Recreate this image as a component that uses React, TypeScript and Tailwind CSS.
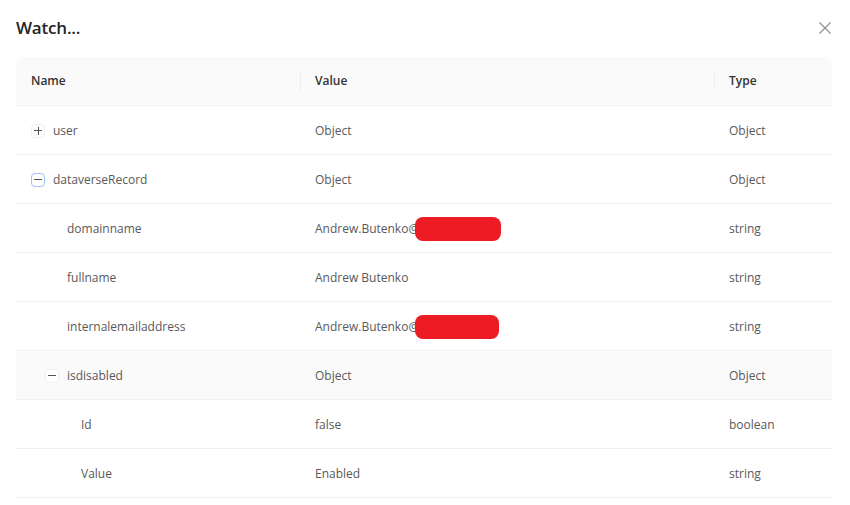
import React from "react";

type Row = {
  name: string;
  value: React.ReactNode;
  type: string;
  level: number;
  icon?: "plus" | "minus" | "minus-focus";
  hover?: boolean;
};

const Redact = ({ w }: { w: number }) => (
  <span
    className="inline-block h-[24px] -ml-[4px] rounded-[8px] bg-[#ed1c24] align-middle"
    style={{ width: w }}
  />
);

const rows: Row[] = [
  { name: "user", value: "Object", type: "Object", level: 0, icon: "plus" },
  { name: "dataverseRecord", value: "Object", type: "Object", level: 0, icon: "minus-focus" },
  {
    name: "domainname",
    value: (
      <span className="flex items-center">
        Andrew.Butenko@<Redact w={86} />
      </span>
    ),
    type: "string",
    level: 1,
  },
  { name: "fullname", value: "Andrew Butenko", type: "string", level: 1 },
  {
    name: "internalemailaddress",
    value: (
      <span className="flex items-center">
        Andrew.Butenko@<Redact w={84} />
      </span>
    ),
    type: "string",
    level: 1,
  },
  { name: "isdisabled", value: "Object", type: "Object", level: 1, icon: "minus", hover: true },
  { name: "Id", value: "false", type: "boolean", level: 2 },
  { name: "Value", value: "Enabled", type: "string", level: 2 },
];

const ExpandIcon = ({ kind }: { kind?: Row["icon"] }) => {
  if (!kind) return <span className="inline-block w-[14px] h-[14px] mr-[8px]" />;
  const focus = kind === "minus-focus";
  return (
    <span
      className={
        "relative inline-flex w-[14px] h-[14px] mr-[8px] rounded-[4px] bg-white border items-center justify-center " +
        (focus ? "border-[#9cc3f5]" : "border-[#f0f0f0]")
      }
    >
      <span className="absolute left-[2px] right-[2px] top-[5.5px] h-[1px] bg-[#555]" />
      {kind === "plus" && (
        <span className="absolute top-[2px] bottom-[2px] left-[5.5px] w-[1px] bg-[#555]" />
      )}
    </span>
  );
};

export default function App() {
  return (
    <div
      className="w-[850px] h-[505px] bg-white overflow-hidden"
      style={{ fontFamily: '"Segoe UI", "Open Sans", "Noto Sans", sans-serif' }}
    >
      <div className="flex items-center justify-between h-[57px] pl-[16px] pr-[18px] pb-[1px]">
        <div className="text-[17px] font-semibold text-[#262626] tracking-[-0.2px]">Watch...</div>
        <svg width="14" height="14" viewBox="0 0 14 14" className="text-[#8c8c8c]">
          <path d="M1.5 1.5 L12.5 12.5 M12.5 1.5 L1.5 12.5" stroke="currentColor" strokeWidth="1.1" />
        </svg>
      </div>
      <div className="mx-[16px] w-[816px] text-[12px] text-[#595959]">
        <div className="grid grid-cols-[284px_414px_118px] h-[49px] bg-[#fafafa] rounded-t-[8px] border-b border-[#f0f0f0] font-semibold text-[#333]">
          <div className="flex items-center pl-[15px]">Name</div>
          <div className="relative flex items-center pl-[15px]">
            <span className="absolute left-0 top-[14px] bottom-[14px] w-[1px] bg-[#f0f0f0]" />
            Value
          </div>
          <div className="relative flex items-center pl-[15px]">
            <span className="absolute left-0 top-[14px] bottom-[14px] w-[1px] bg-[#f0f0f0]" />
            Type
          </div>
        </div>
        {rows.map((r, i) => (
          <div
            key={i}
            className={
              "grid grid-cols-[284px_414px_118px] h-[49px] border-b border-[#f0f0f0] pt-[1px] " +
              (r.hover ? "bg-[#fafafa]" : "bg-white")
            }
          >
            <div className="flex items-center pl-[15px]">
              <span style={{ width: r.level * 14 }} className="inline-block shrink-0" />
              <ExpandIcon kind={r.icon} />
              <span>{r.name}</span>
            </div>
            <div className="flex items-center pl-[15px]">{r.value}</div>
            <div className="flex items-center pl-[15px]">{r.type}</div>
          </div>
        ))}
      </div>
    </div>
  );
}
